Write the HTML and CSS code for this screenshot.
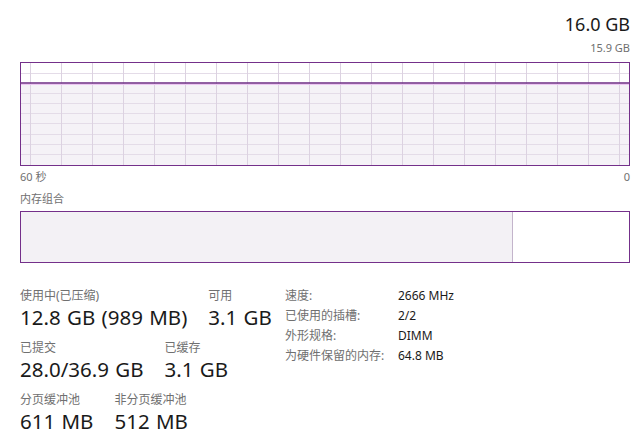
FILE: index.html
```html
<!DOCTYPE html>
<html>
<head>
<meta charset="utf-8">
<link rel="stylesheet" href="styles.css">
</head>
<body>
<div class="page">
  <div class="head-total">16.0 GB</div>
  <div class="head-max">15.9 GB</div>
  <div class="graph">
    <svg width="608" height="102" viewBox="0 0 608 102" xmlns="http://www.w3.org/2000/svg">
      <rect x="0" y="20" width="608" height="82" fill="#f5f2f7"/>
      <g stroke="#e4dce8" stroke-width="1">
        <line x1="0" y1="10.5" x2="608" y2="10.5"/>
        <line x1="0" y1="30.5" x2="608" y2="30.5"/>
        <line x1="0" y1="40.5" x2="608" y2="40.5"/>
        <line x1="0" y1="50.5" x2="608" y2="50.5"/>
        <line x1="0" y1="60.5" x2="608" y2="60.5"/>
        <line x1="0" y1="71.5" x2="608" y2="71.5"/>
        <line x1="0" y1="81.5" x2="608" y2="81.5"/>
        <line x1="0" y1="91.5" x2="608" y2="91.5"/>
      </g>
      <g stroke="#dcd2e1" stroke-width="1">
        <line x1="9.5" y1="0" x2="9.5" y2="102"/>
        <line x1="40.5" y1="0" x2="40.5" y2="102"/>
        <line x1="71.5" y1="0" x2="71.5" y2="102"/>
        <line x1="102.5" y1="0" x2="102.5" y2="102"/>
        <line x1="133.5" y1="0" x2="133.5" y2="102"/>
        <line x1="164.5" y1="0" x2="164.5" y2="102"/>
        <line x1="195.5" y1="0" x2="195.5" y2="102"/>
        <line x1="226.5" y1="0" x2="226.5" y2="102"/>
        <line x1="257.5" y1="0" x2="257.5" y2="102"/>
        <line x1="288.5" y1="0" x2="288.5" y2="102"/>
        <line x1="319.5" y1="0" x2="319.5" y2="102"/>
        <line x1="350.5" y1="0" x2="350.5" y2="102"/>
        <line x1="381.5" y1="0" x2="381.5" y2="102"/>
        <line x1="412.5" y1="0" x2="412.5" y2="102"/>
        <line x1="443.5" y1="0" x2="443.5" y2="102"/>
        <line x1="474.5" y1="0" x2="474.5" y2="102"/>
        <line x1="505.5" y1="0" x2="505.5" y2="102"/>
        <line x1="536.5" y1="0" x2="536.5" y2="102"/>
        <line x1="567.5" y1="0" x2="567.5" y2="102"/>
        <line x1="598.5" y1="0" x2="598.5" y2="102"/>
      </g>
      <line x1="0" y1="21.5" x2="608" y2="21.5" stroke="#ecc6f2" stroke-width="1"/>
      <line x1="0" y1="20" x2="608" y2="20" stroke="#6e2b85" stroke-width="1.6"/>
    </svg>
  </div>
  <div class="axis">
    <span>60 秒</span>
    <span>0</span>
  </div>
  <div class="comp-title">内存组合</div>
  <div class="comp">
    <div class="comp-used"></div>
    <div class="comp-free"></div>
  </div>
  <div class="stats">
    <div class="stats-left">
      <div class="stat-row">
        <div class="stat">
          <div class="label">使用中(已压缩)</div>
          <div class="value">12.8 GB (989 MB)</div>
        </div>
        <div class="stat">
          <div class="label">可用</div>
          <div class="value">3.1 GB</div>
        </div>
      </div>
      <div class="stat-row">
        <div class="stat">
          <div class="label">已提交</div>
          <div class="value">28.0/36.9 GB</div>
        </div>
        <div class="stat">
          <div class="label">已缓存</div>
          <div class="value">3.1 GB</div>
        </div>
      </div>
      <div class="stat-row">
        <div class="stat">
          <div class="label">分页缓冲池</div>
          <div class="value">611 MB</div>
        </div>
        <div class="stat">
          <div class="label">非分页缓冲池</div>
          <div class="value">512 MB</div>
        </div>
      </div>
    </div>
    <div class="props">
      <div class="pk">速度:</div><div class="pv">2666 MHz</div>
      <div class="pk">已使用的插槽:</div><div class="pv">2/2</div>
      <div class="pk">外形规格:</div><div class="pv">DIMM</div>
      <div class="pk">为硬件保留的内存:</div><div class="pv">64.8 MB</div>
    </div>
  </div>
</div>
</body>
</html>
```

FILE: styles.css
```css
html, body {
  margin: 0;
  padding: 0;
  background: #ffffff;
}
body {
  font-family: "Noto Sans", "Noto Sans CJK SC", sans-serif;
  color: #1a1a1a;
}
.page {
  width: 610px;
  padding: 13px 14px 0 20px;
  display: flex;
  flex-direction: column;
}
.head-total {
  align-self: flex-end;
  font-size: 18px;
  line-height: 22px;
  color: #1a1a1a;
}
.head-max {
  align-self: flex-end;
  margin-top: 6px;
  font-size: 11px;
  line-height: 14px;
  color: #6f6f6f;
}
.graph {
  margin-top: 7px;
  border: 1px solid #74308a;
  height: 102px;
  overflow: hidden;
}
.graph svg {
  display: block;
}
.axis {
  display: flex;
  justify-content: space-between;
  margin-top: 4px;
  font-size: 11px;
  line-height: 14px;
  color: #707070;
}
.comp-title {
  margin-top: 8px;
  font-size: 11px;
  line-height: 14px;
  color: #707070;
}
.comp {
  margin-top: 5px;
  height: 50px;
  border: 1px solid #74308a;
  display: flex;
}
.comp-used {
  width: 491px;
  background: #f3f1f5;
  border-right: 1px solid #c3b4cb;
}
.comp-free {
  flex: 1;
  background: #ffffff;
}
.stats {
  margin-top: 25px;
  display: flex;
}
.stats-left {
  width: 265px;
  display: flex;
  flex-direction: column;
  gap: 10px;
}
.stat-row {
  display: flex;
  gap: 21px;
}
.label {
  font-size: 12px;
  line-height: 16px;
  color: #707070;
}
.value {
  font-size: 20.5px;
  line-height: 26px;
  word-spacing: 1px;
  color: #1a1a1a;
}
.props {
  display: grid;
  grid-template-columns: 113px auto;
  grid-auto-rows: 20px;
  align-content: start;
  font-size: 12px;
  line-height: 20px;
  margin-top: -2px;
}
.pk {
  color: #707070;
}
.pv {
  color: #1a1a1a;
}
```
